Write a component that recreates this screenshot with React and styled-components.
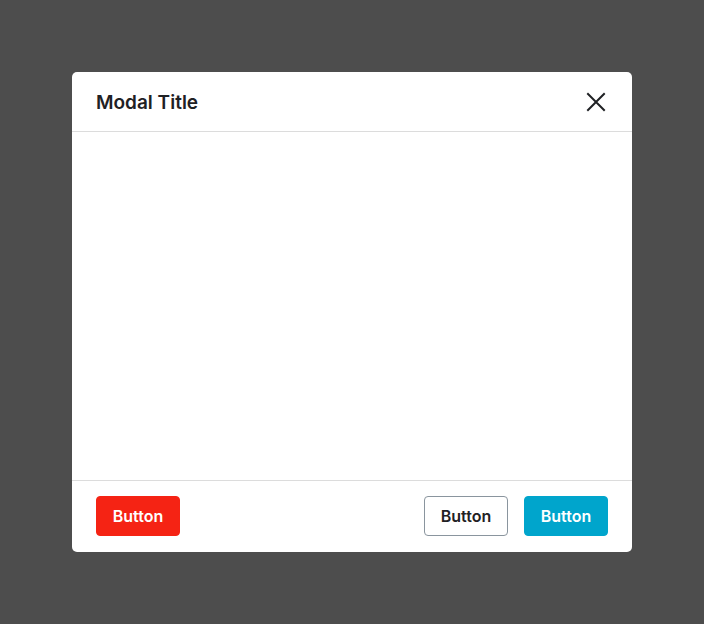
import React from "react"
import styled, { createGlobalStyle } from "styled-components"

const GlobalStyle = createGlobalStyle`
  html, body {
    margin: 0;
    padding: 0;
    height: 100%;
  }
  body {
    background: #4d4d4d;
    font-family: Inter, "Liberation Sans", sans-serif;
  }
  #root {
    height: 100%;
  }
`

const CloseIcon = () => (
  <svg width="24" height="24" viewBox="0 0 24 24" fill="none">
    <path
      d="M4 4L20 20M20 4L4 20"
      stroke="#1f2124"
      strokeWidth="2"
      strokeLinecap="square"
    />
  </svg>
)

const App = () => {
  return (
    <Backdrop>
      <GlobalStyle />
      <Modal>
        <Header>
          <Title>Modal Title</Title>
          <CloseButton aria-label="Close">
            <CloseIcon />
          </CloseButton>
        </Header>
        <Body />
        <Footer>
          <Button variant="danger">Button</Button>
          <Actions>
            <Button variant="outline">Button</Button>
            <Button variant="primary">Button</Button>
          </Actions>
        </Footer>
      </Modal>
    </Backdrop>
  )
}

export default App

const Backdrop = styled.div`
  height: 100vh;
  display: flex;
  align-items: center;
  justify-content: center;
`

const Modal = styled.div`
  width: 560px;
  height: 480px;
  background: #fff;
  border-radius: 5px;
  display: flex;
  flex-direction: column;
  box-sizing: border-box;
  overflow: hidden;
`

const Header = styled.div`
  height: 60px;
  box-sizing: border-box;
  border-bottom: 1px solid #dcdcdc;
  padding: 1px 24px 0;
  display: flex;
  align-items: center;
  justify-content: space-between;
`

const Title = styled.h2`
  margin: 0;
  font-size: 19px;
  font-weight: 600;
  color: #1f2124;
`

const CloseButton = styled.button`
  border: 0;
  background: none;
  padding: 0;
  display: flex;
  cursor: pointer;
`

const Body = styled.div`
  flex: 1;
`

const Footer = styled.div`
  height: 72px;
  box-sizing: border-box;
  border-top: 1px solid #dcdcdc;
  padding: 15px 24px 16px;
  display: flex;
  align-items: center;
  justify-content: space-between;
`

const Actions = styled.div`
  display: flex;
  gap: 16px;
`

const variants = {
  danger: "background: #f52314; color: #fff; border-color: #f52314;",
  outline: "background: #fff; color: #1f2124; border-color: #8a959e;",
  primary: "background: #00a5cc; color: #fff; border-color: #00a5cc;",
}

const Button = styled.button`
  height: 40px;
  width: 84px;
  box-sizing: border-box;
  border: 1px solid;
  border-radius: 4px;
  font-family: Inter, "Liberation Sans", sans-serif;
  font-size: 16px;
  font-weight: 600;
  padding: 0;
  cursor: pointer;
  ${p => variants[p.variant]}
`
